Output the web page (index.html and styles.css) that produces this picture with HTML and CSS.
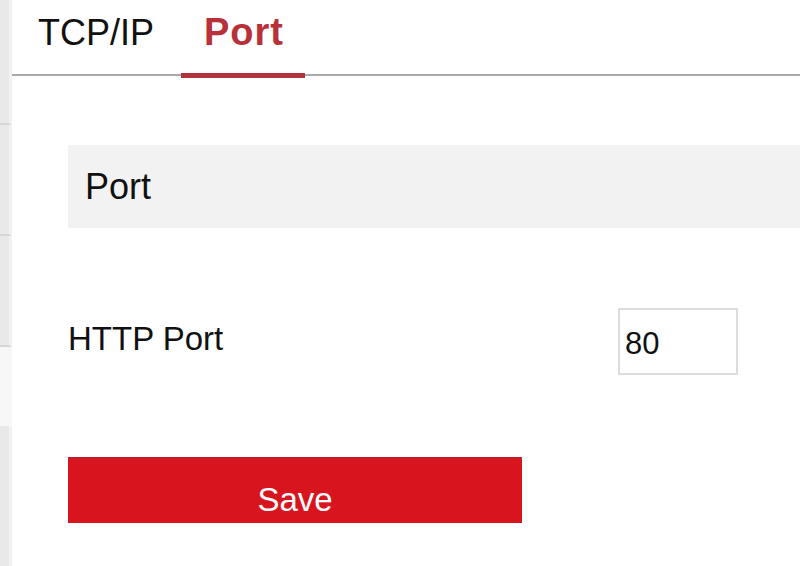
FILE: index.html
```html
<!DOCTYPE html>
<html lang="en">
<head>
    <meta charset="UTF-8">
    <meta name="viewport" content="width=device-width, initial-scale=1.0">
    <title>Network - Port</title>
    <link rel="stylesheet" href="styles.css">
</head>
<body>
    <aside class="sidebar">
        <div class="side-item first"></div>
        <div class="side-item"></div>
        <div class="side-item"></div>
        <div class="side-gap"></div>
        <div class="side-rest"></div>
    </aside>

    <main class="content">
        <nav class="tabs">
            <div class="tab">TCP/IP</div>
            <div class="tab active">Port</div>
        </nav>

        <div class="panel">
            <div class="section-title">Port</div>

            <div class="form-row">
                <label class="form-label" for="httpPort">HTTP Port</label>
                <input class="form-input" type="text" id="httpPort" value="80">
            </div>

            <button class="save-btn" type="button">Save</button>
        </div>
    </main>
</body>
</html>
```

FILE: styles.css
```css
body {
    font-family: 'Liberation Sans', Arial, sans-serif;
    margin: 0;
    padding: 0;
    background-color: #ffffff;
    color: #111111;
    display: flex;
    height: 566px;
    overflow: hidden;
}

/* left menu edge */
.sidebar {
    width: 12px;
    flex-shrink: 0;
    display: flex;
    flex-direction: column;
}

.side-item {
    height: 109px;
    background-color: #e9e9e9;
    border-right: 3px solid #f2f2f2;
    border-bottom: 2px solid #d6d6d6;
}

.side-item.first {
    height: 123px;
}

.side-gap {
    height: 79px;
    background-color: #f7f7f7;
}

.side-rest {
    flex: 1;
    background-color: #e9e9e9;
    border-right: 3px solid #f2f2f2;
}

.content {
    flex: 1;
}

/* tabs */
.tabs {
    display: flex;
    align-items: flex-start;
    gap: 4px;
    height: 74px;
    border-bottom: 2px solid #aaaaaa;
    padding-left: 3px;
}

.tab {
    font-size: 36px;
    line-height: 41px;
    padding: 12px 23px 0 23px;
    height: 61px;
    border-bottom: 5px solid transparent;
    color: #111111;
}

.tab.active {
    color: #b8303a;
    font-size: 38px;
    font-weight: bold;
    letter-spacing: 1px;
    padding-right: 21px;
    border-bottom-color: #b2323c;
}

/* panel */
.panel {
    padding: 69px 0 0 56px;
}

.section-title {
    background-color: #f2f2f2;
    height: 83px;
    line-height: 83px;
    padding-left: 17px;
    font-size: 36px;
    color: #111111;
}

.form-row {
    display: flex;
    align-items: center;
    margin-top: 80px;
}

.form-label {
    width: 550px;
    font-size: 33px;
    margin-bottom: 6px;
}

.form-input {
    box-sizing: border-box;
    width: 120px;
    height: 67px;
    border: 2px solid #dddddd;
    padding: 4px 0 0 5px;
    font-family: 'Liberation Sans', Arial, sans-serif;
    font-size: 31px;
    color: #111111;
    outline: none;
}

.save-btn {
    display: block;
    margin-top: 82px;
    width: 454px;
    height: 66px;
    background-color: #d8141e;
    border: none;
    border-top: 2px solid #c41c28;
    color: #ffffff;
    font-family: 'Liberation Sans', Arial, sans-serif;
    font-size: 33px;
    padding: 18px 0 0 0;
    cursor: pointer;
}
```
